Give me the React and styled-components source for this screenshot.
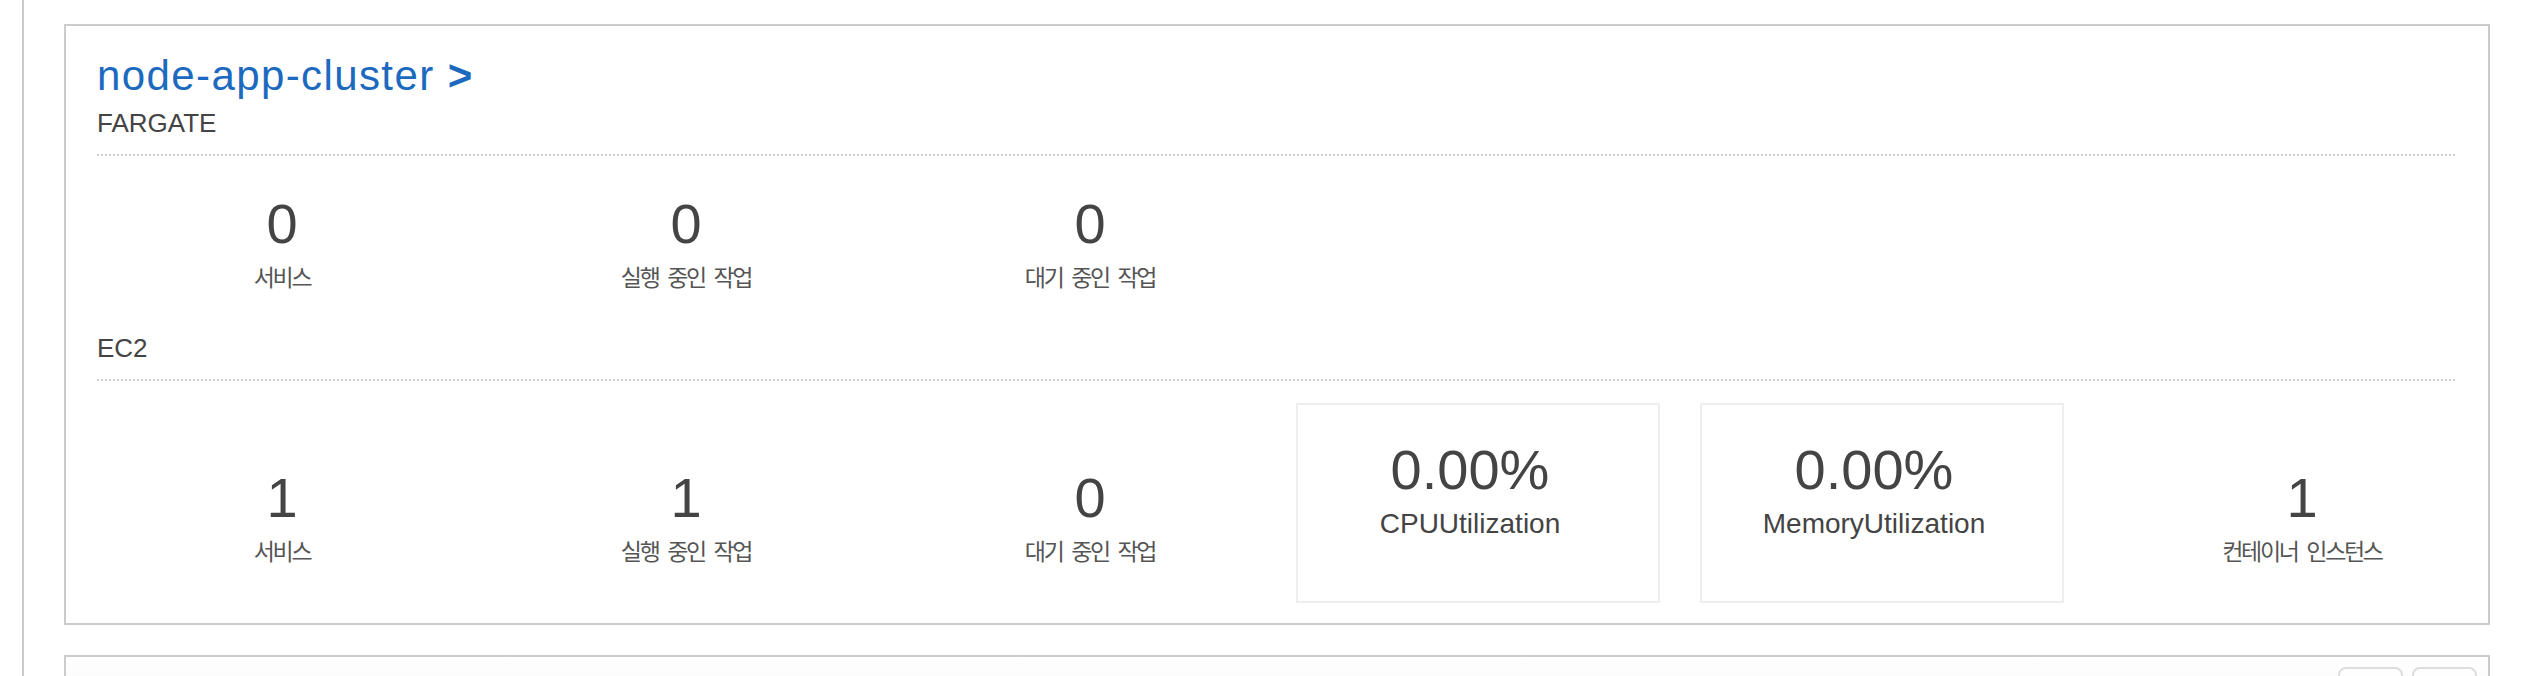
import React from 'react';
import styled, { createGlobalStyle } from 'styled-components';

const GlobalStyle = createGlobalStyle`
  body {
    margin: 0;
    background: #fff;
    color: #444;
    font-family: "Liberation Sans", Arial, "Noto Sans CJK KR", sans-serif;
  }
`;

const Page = styled.div`
  margin-left: 22px;
  border-left: 2px solid #ccc;
  min-height: 676px;
  padding: 24px 0 0 40px;
  box-sizing: border-box;
`;

const Card = styled.section`
  width: 2426px;
  box-sizing: border-box;
  border: 2px solid #ccc;
  padding: 26px 31px 20px;
  background: #fff;
`;

const Title = styled.a`
  display: block;
  font-size: 42px;
  line-height: 48px;
  letter-spacing: 1.4px;
  color: #1b6ac0;
  text-decoration: none;
`;

const Chevron = styled.span`
  font-weight: bold;
  letter-spacing: 0;
`;

const GroupHeader = styled.div`
  margin-top: ${p => p.$gap}px;
  font-size: 26px;
  line-height: 30px;
  padding-bottom: 18px;
  background: repeating-linear-gradient(to right, #ccc 0 2px, transparent 2px 4px) left bottom / 100% 2px no-repeat;
`;

const StatsRow = styled.div`
  display: grid;
  grid-template-columns: repeat(6, 404px);
  align-items: center;
  margin: ${p => p.$gap}px 0 0 -17px;
`;

const Stat = styled.div`
  padding-top: 26px;
  text-align: center;
`;

const Value = styled.div`
  font-size: 56px;
  line-height: 64px;
  color: #444;
`;

const Label = styled.div`
  margin-top: 8px;
  font-size: 23px;
  line-height: 28px;
  letter-spacing: -2.3px;
  word-spacing: 4.5px;
  color: #555;
`;

const MetricBox = styled.div`
  box-sizing: border-box;
  width: 364px;
  height: 200px;
  margin-left: 4px;
  padding: 33px 16px 0 0;
  border: 2px solid #eee;
  text-align: center;
`;

const MetricLabel = styled.div`
  margin-top: 6px;
  font-size: 28px;
  line-height: 32px;
  color: #444;
`;

const NextCard = styled.section`
  width: 2426px;
  height: 80px;
  box-sizing: border-box;
  margin-top: 30px;
  border: 2px solid #ccc;
  padding: 10px 11px 0;
  background: linear-gradient(#fff, #f4f4f4);
  display: flex;
  justify-content: flex-end;
  gap: 9px;
`;

const ToolButton = styled.button`
  width: 65px;
  height: 40px;
  border: 2px solid #ddd;
  border-radius: 8px;
  background: linear-gradient(#fff, #f7f7f7);
`;

const fargate = [
  { value: 0, label: '서비스' },
  { value: 0, label: '실행 중인 작업' },
  { value: 0, label: '대기 중인 작업' },
];

function StatCell({ value, label }) {
  return (
    <Stat>
      <Value>{value}</Value>
      <Label>{label}</Label>
    </Stat>
  );
}

function Metric({ value, label }) {
  return (
    <MetricBox>
      <Value>{value}</Value>
      <MetricLabel>{label}</MetricLabel>
    </MetricBox>
  );
}

export default function App() {
  return (
    <>
      <GlobalStyle />
      <Page>
        <Card>
          <Title href="#">node-app-cluster <Chevron>&gt;</Chevron></Title>
          <GroupHeader $gap={8}>FARGATE</GroupHeader>
          <StatsRow $gap={10}>
            {fargate.map(s => <StatCell key={s.label} {...s} />)}
          </StatsRow>
          <GroupHeader $gap={41}>EC2</GroupHeader>
          <StatsRow $gap={22}>
            <StatCell value={1} label="서비스" />
            <StatCell value={1} label="실행 중인 작업" />
            <StatCell value={0} label="대기 중인 작업" />
            <Metric value="0.00%" label="CPUUtilization" />
            <Metric value="0.00%" label="MemoryUtilization" />
            <StatCell value={1} label="컨테이너 인스턴스" />
          </StatsRow>
        </Card>
        <NextCard>
          <ToolButton />
          <ToolButton />
        </NextCard>
      </Page>
    </>
  );
}
